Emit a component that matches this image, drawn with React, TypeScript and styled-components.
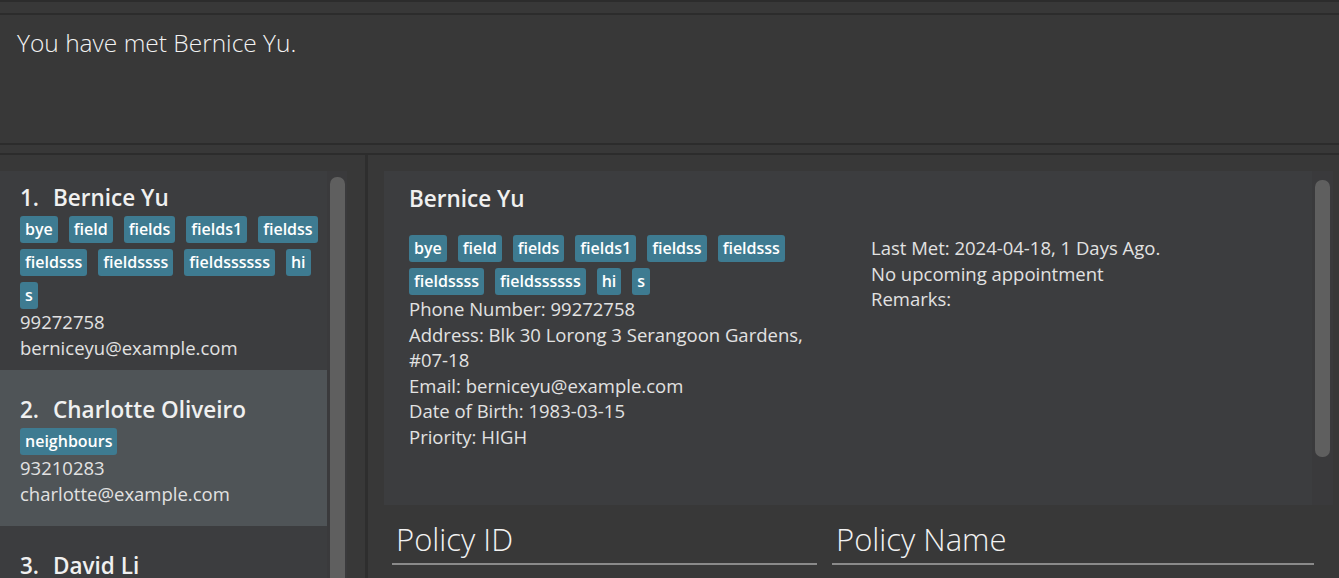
import styled, { createGlobalStyle } from 'styled-components'

const GlobalStyle = createGlobalStyle`
  html, body {
    margin: 0;
    padding: 0;
    background: #383838;
    font-family: 'Open Sans', 'Noto Sans', sans-serif;
    overflow: hidden;
  }
`

const Window = styled.div`
  width: 1339px;
  height: 578px;
  display: flex;
  flex-direction: column;
  background: #383838;
  overflow: hidden;
`

const TopStrip = styled.div`
  height: 11px;
  border-top: 2px solid #2c2c2c;
  border-bottom: 2px solid #2c2c2c;
  flex-shrink: 0;
`

const ResultDisplay = styled.div`
  height: 130px;
  padding: 11px 17px 0;
  box-sizing: border-box;
  color: #f2f2f2;
  font-size: 24.5px;
  font-weight: 300;
  border-bottom: 2px solid #2c2c2c;
  flex-shrink: 0;
`

const Divider = styled.div`
  height: 8px;
  border-bottom: 2px solid #2c2c2c;
  flex-shrink: 0;
`

const Main = styled.div`
  flex: 1;
  display: flex;
  min-height: 0;
`

const LeftPane = styled.div`
  width: 365px;
  padding-top: 16px;
  display: flex;
  border-right: 3px solid #2e2e2e;
  flex-shrink: 0;
`

const List = styled.div`
  width: 327px;
  overflow: hidden;
`

// the list is scrolled down a little, so the first cell is cut at the top
const ListInner = styled.div`
  margin-top: -13px;
`

const Cell = styled.div<{ $selected?: boolean; $bottom?: number }>`
  background: ${(p) => (p.$selected ? '#4f5457' : '#3c3d3f')};
  padding: 25px 6px ${(p) => p.$bottom ?? 20}px 20px;
  color: #e6e6e6;
`

const CellName = styled.div`
  font-size: 22.5px;
  font-weight: 600;
  color: #f0f0f0;
  line-height: 30px;
  display: flex;
  gap: 14px;
  margin-bottom: 3px;
`

const SmallLabel = styled.div`
  font-size: 18.5px;
  line-height: 25.6px;
  color: #e2e2e2;
`

const NoWrap = styled.span`
  white-space: nowrap;
`

const Tags = styled.div`
  display: flex;
  flex-wrap: wrap;
  gap: 6px 11px;
`

const Tag = styled.span`
  background: #3e7b91;
  color: #ffffff;
  font-size: 16px;
  font-weight: 600;
  height: 27px;
  line-height: 27px;
  padding: 0 5px;
  border-radius: 3px;
`

const ScrollTrack = styled.div`
  width: 20px;
  background: #3a3a3c;
  display: flex;
  justify-content: center;
  padding-top: 6px;
  box-sizing: border-box;
`

const ScrollThumb = styled.div<{ $h: number }>`
  width: 15px;
  height: ${(p) => p.$h}px;
  border-radius: 7px;
  background: #5f5f5f;
`

const RightPane = styled.div`
  flex: 1;
  padding: 16px 6px 0 16px;
  display: flex;
  flex-direction: column;
  min-width: 0;
`

const DetailCard = styled.div`
  height: 334px;
  background: #3c3d3f;
  display: flex;
  flex-shrink: 0;
`

const DetailBody = styled.div`
  flex: 1;
  padding: 13px 0 0 25px;
  display: grid;
  grid-template-columns: 420px 1fr;
  column-gap: 42px;
  align-items: start;
  align-content: start;
`

const DetailName = styled.div`
  grid-column: 1 / -1;
  font-size: 22.5px;
  font-weight: 600;
  color: #f0f0f0;
  line-height: 30px;
  margin-bottom: 21px;
`

const DetailCol = styled.div`
  ${Tags} {
    margin-bottom: 1px;
  }
`

const DetailTrack = styled.div`
  width: 21px;
  background: #3a3a3c;
  display: flex;
  justify-content: center;
  padding-top: 9px;
  box-sizing: border-box;
`

const PolicyHeader = styled.div`
  display: grid;
  grid-template-columns: 425px 482px;
  column-gap: 15px;
  padding: 16px 0 0 8px;
`

const PolicyCol = styled.div`
  font-size: 31px;
  font-weight: 300;
  color: #f2f2f2;
  padding: 0 0 6px 4px;
  border-bottom: 2px solid #8a8a8a;
  line-height: 36px;
`

const berniceTags = [
  'bye',
  'field',
  'fields',
  'fields1',
  'fieldss',
  'fieldsss',
  'fieldssss',
  'fieldssssss',
  'hi',
  's',
]

function TagList({ tags }: { tags: string[] }) {
  return (
    <Tags>
      {tags.map((t) => (
        <Tag key={t}>{t}</Tag>
      ))}
    </Tags>
  )
}

export default function App() {
  return (
    <>
      <GlobalStyle />
      <Window>
        <TopStrip />
        <ResultDisplay>You have met Bernice Yu.</ResultDisplay>
        <Divider />
        <Main>
          <LeftPane>
            <List>
              <ListInner>
                <Cell $bottom={10}>
                  <CellName>
                    <span>1.</span>
                    <span>Bernice Yu</span>
                  </CellName>
                  <TagList tags={berniceTags} />
                  <SmallLabel>99272758</SmallLabel>
                  <SmallLabel>berniceyu@example.com</SmallLabel>
                </Cell>
                <Cell $selected>
                  <CellName>
                    <span>2.</span>
                    <span>Charlotte Oliveiro</span>
                  </CellName>
                  <TagList tags={['neighbours']} />
                  <SmallLabel>93210283</SmallLabel>
                  <SmallLabel>charlotte@example.com</SmallLabel>
                </Cell>
                <Cell>
                  <CellName>
                    <span>3.</span>
                    <span>David Li</span>
                  </CellName>
                </Cell>
              </ListInner>
            </List>
            <ScrollTrack>
              <ScrollThumb $h={420} />
            </ScrollTrack>
          </LeftPane>
          <RightPane>
            <DetailCard>
              <DetailBody>
                <DetailName>Bernice Yu</DetailName>
                <DetailCol>
                  <TagList tags={berniceTags} />
                  <SmallLabel>Phone Number: 99272758</SmallLabel>
                  <SmallLabel>
                    Address: Blk 30 Lorong 3 Serangoon Gardens, <NoWrap>#07-18</NoWrap>
                  </SmallLabel>
                  <SmallLabel>Email: berniceyu@example.com</SmallLabel>
                  <SmallLabel>Date of Birth: 1983-03-15</SmallLabel>
                  <SmallLabel>Priority: HIGH</SmallLabel>
                </DetailCol>
                <DetailCol>
                  <SmallLabel>Last Met: 2024-04-18, 1 Days Ago.</SmallLabel>
                  <SmallLabel>No upcoming appointment</SmallLabel>
                  <SmallLabel>Remarks:</SmallLabel>
                </DetailCol>
              </DetailBody>
              <DetailTrack>
                <ScrollThumb $h={277} />
              </DetailTrack>
            </DetailCard>
            <PolicyHeader>
              <PolicyCol>Policy ID</PolicyCol>
              <PolicyCol>Policy Name</PolicyCol>
            </PolicyHeader>
          </RightPane>
        </Main>
      </Window>
    </>
  )
}
